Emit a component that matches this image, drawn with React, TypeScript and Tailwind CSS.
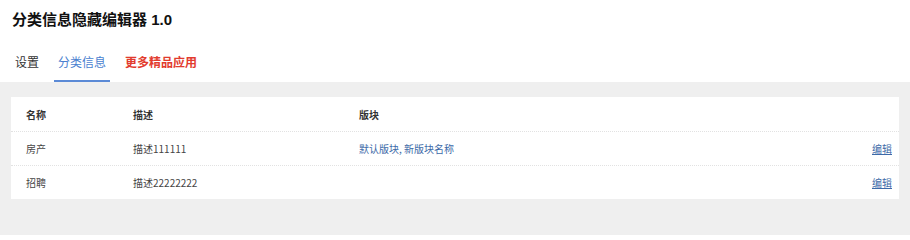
import React from "react";

const rows = [
  { name: "房产", desc: "描述111111", blocks: "默认版块, 新版块名称" },
  { name: "招聘", desc: "描述22222222", blocks: "" },
];

export default function App() {
  return (
    <div
      className="w-[910px] h-[235px] bg-[#efefef] overflow-hidden"
      style={{ fontFamily: '"Noto Sans CJK SC", "Noto Sans", sans-serif' }}
    >
      <div className="bg-white">
        <div
          className="h-[40px] flex items-center pl-[12px] text-[15px] font-bold text-[#111]"
          style={{ fontFamily: '"Liberation Sans", "Noto Sans CJK SC", sans-serif' }}
        >
          分类信息隐藏编辑器 1.0
        </div>
        <div className="h-[42px] flex pl-[11px] gap-[11px] text-[12px]">
          <div className="h-full flex items-center pt-[4px] px-[4px] border-b-2 border-transparent text-[#333]">
            设置
          </div>
          <div className="h-full flex items-center pt-[4px] px-[4px] border-b-2 border-[#5b8ad6] text-[#4a7fd0]">
            分类信息
          </div>
          <div className="h-full flex items-center pt-[4px] px-[4px] border-b-2 border-transparent text-[#e23b2e] font-bold">
            更多精品应用
          </div>
        </div>
      </div>
      <div className="pt-[15px] px-[11px]">
        <div className="bg-white text-[10px]">
          <div className="h-[35px] grid grid-cols-[107px_226px_1fr_auto] items-center pl-[15px] pr-[7px] border-b border-dotted border-[#e2e2e2] font-semibold text-[#333]">
            <div>名称</div>
            <div>描述</div>
            <div>版块</div>
            <div></div>
          </div>
          {rows.map((r, i) => (
            <div
              key={r.name}
              className={
                i === 0
                  ? "h-[34px] grid grid-cols-[107px_226px_1fr_auto] items-center pl-[15px] pr-[7px] border-b border-dotted border-[#e2e2e2] text-[#444]"
                  : "h-[33px] grid grid-cols-[107px_226px_1fr_auto] items-center pl-[15px] pr-[7px] text-[#444]"
              }
            >
              <div>{r.name}</div>
              <div>{r.desc}</div>
              <div className="text-[#3d6aa8]">{r.blocks}</div>
              <div className="text-[#3d6aa8] underline">编辑</div>
            </div>
          ))}
        </div>
      </div>
    </div>
  );
}
